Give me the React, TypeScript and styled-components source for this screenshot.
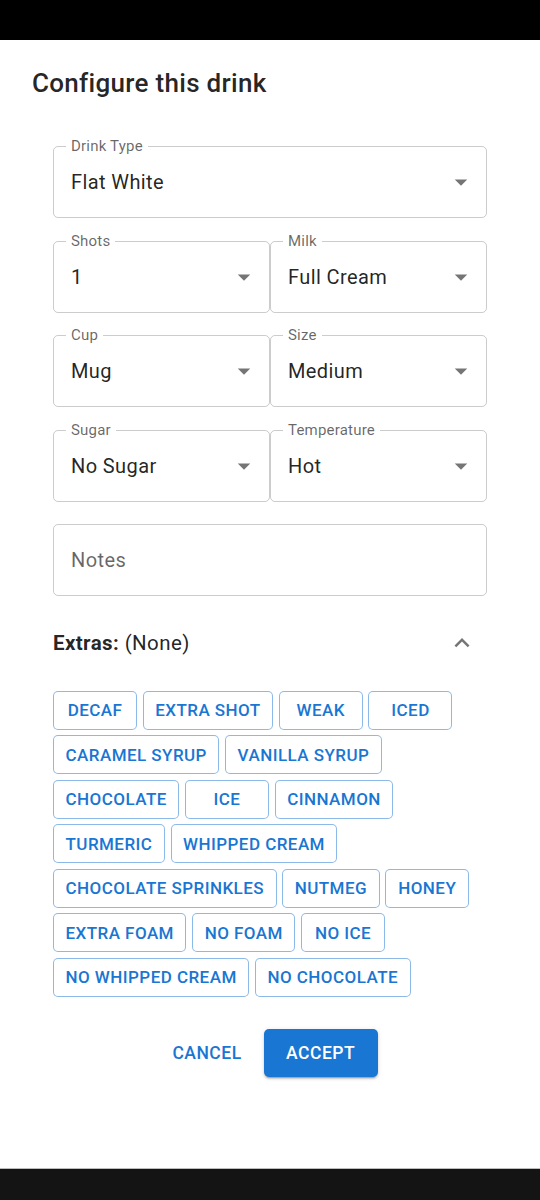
import React from 'react'
import styled, { createGlobalStyle } from 'styled-components'

const GlobalStyle = createGlobalStyle`
  html, body {
    margin: 0;
    padding: 0;
    background: #ffffff;
  }

  body {
    font-family: Roboto, 'Liberation Sans', Arial, sans-serif;
    -webkit-font-smoothing: antialiased;
  }
`

const Primary = '#1976d2'
const TextMain = 'rgba(0, 0, 0, 0.87)'
const TextMuted = 'rgba(0, 0, 0, 0.6)'

const extras = [
  'Decaf',
  'Extra Shot',
  'Weak',
  'Iced',
  'Caramel Syrup',
  'Vanilla Syrup',
  'Chocolate',
  'Ice',
  'Cinnamon',
  'Turmeric',
  'Whipped Cream',
  'Chocolate Sprinkles',
  'Nutmeg',
  'Honey',
  'Extra Foam',
  'No Foam',
  'No Ice',
  'No Whipped Cream',
  'No Chocolate',
]

const selectRows: [string, string][][] = [
  [
    ['Shots', '1'],
    ['Milk', 'Full Cream'],
  ],
  [
    ['Cup', 'Mug'],
    ['Size', 'Medium'],
  ],
  [
    ['Sugar', 'No Sugar'],
    ['Temperature', 'Hot'],
  ],
]

const ArrowDropDown = () => (
  <svg width='30' height='30' viewBox='0 0 24 24' fill='rgba(0,0,0,0.54)'>
    <path d='M7 10l5 5 5-5z' />
  </svg>
)

const ExpandLess = () => (
  <svg width='30' height='30' viewBox='0 0 24 24' fill='rgba(0,0,0,0.54)'>
    <path d='M12 8l-6 6 1.41 1.41L12 10.83l4.59 4.58L18 14z' />
  </svg>
)

const SelectField: React.FunctionComponent<{ label: string; value: string }> = ({ label, value }) => (
  <Field>
    <FieldLabel>{label}</FieldLabel>
    <FieldValue>{value}</FieldValue>
    <ArrowSlot>
      <ArrowDropDown />
    </ArrowSlot>
  </Field>
)

export default function App() {
  return (
    <>
      <GlobalStyle />
      <Screen>
        <StatusBar />
        <Dialog>
          <Title>Configure this drink</Title>
          <Form>
            <SelectField label='Drink Type' value='Flat White' />
            {selectRows.map((row, i) => (
              <Pair key={i}>
                {row.map(([label, value]) => (
                  <SelectField key={label} label={label} value={value} />
                ))}
              </Pair>
            ))}
            <Field>
              <Placeholder>Notes</Placeholder>
            </Field>

            <ExtrasHeader>
              <ExtrasTitle>
                <strong>Extras:</strong> (None)
              </ExtrasTitle>
              <ExpandLess />
            </ExtrasHeader>

            <Chips>
              {extras.map((extra) => (
                <Chip key={extra}>{extra}</Chip>
              ))}
            </Chips>

            <Actions>
              <TextButton>Cancel</TextButton>
              <ContainedButton>Accept</ContainedButton>
            </Actions>
          </Form>
        </Dialog>
        <NavBar />
      </Screen>
    </>
  )
}

const Screen = styled.div`
  display: flex;
  flex-direction: column;
  width: 540px;
  height: 1200px;
  overflow: hidden;
`

const StatusBar = styled.div`
  height: 40px;
  flex-shrink: 0;
  background: #000000;
`

const NavBar = styled.div`
  height: 31px;
  flex-shrink: 0;
  background: #141414;
  border-top: 1px solid #bdbdbd;
`

const Dialog = styled.div`
  flex: 1;
  background: #ffffff;
  padding-top: 27px;
`

const Title = styled.h2`
  margin: 0 0 0 32px;
  font-size: 26px;
  font-weight: 500;
  line-height: 32px;
  letter-spacing: 0.3px;
  color: ${TextMain};
`

const Form = styled.div`
  display: flex;
  flex-direction: column;
  gap: 22.5px;
  padding: 47px 53px 0;
`

const Pair = styled.div`
  display: grid;
  grid-template-columns: 1fr 1fr;
`

const Field = styled.div`
  position: relative;
  display: flex;
  align-items: center;
  height: 72px;
  box-sizing: border-box;
  padding: 0 10px 0 17px;
  border: 1px solid rgba(0, 0, 0, 0.2);
  border-radius: 5px;
`

const FieldLabel = styled.span`
  position: absolute;
  top: -10px;
  left: 12px;
  padding: 0 5px;
  background: #ffffff;
  font-size: 15px;
  line-height: 18px;
  color: ${TextMuted};
  letter-spacing: 0.2px;
`

const FieldValue = styled.span`
  flex: 1;
  font-size: 20px;
  color: ${TextMain};
  letter-spacing: 0.4px;
`

const Placeholder = styled(FieldValue)`
  color: ${TextMuted};
`

const ArrowSlot = styled.span`
  display: flex;
  width: 30px;
  height: 30px;
`

const ExtrasHeader = styled.div`
  display: flex;
  align-items: center;
  justify-content: space-between;
  height: 48px;
  margin-top: 0.5px;
  padding-right: 10px;
`

const ExtrasTitle = styled.div`
  font-size: 20.5px;
  color: ${TextMain};
  letter-spacing: 0.4px;

  strong {
    font-weight: 700;
  }
`

const Chips = styled.div`
  display: flex;
  flex-wrap: wrap;
  gap: 5.5px 5.7px;
  margin-top: 1px;
`

const Chip = styled.button`
  min-width: 84px;
  height: 39px;
  padding: 0 11.5px;
  box-sizing: border-box;
  background: #ffffff;
  border: 1px solid rgba(25, 118, 210, 0.5);
  border-radius: 5px;
  font-family: inherit;
  font-size: 17px;
  font-weight: 500;
  letter-spacing: 0.45px;
  text-transform: uppercase;
  color: ${Primary};
`

const Actions = styled.div`
  display: flex;
  justify-content: center;
  gap: 12px;
  margin-top: 9.5px;
`

const TextButton = styled.button`
  height: 48px;
  padding: 0 10px;
  background: transparent;
  border: none;
  border-radius: 5px;
  font-family: inherit;
  font-size: 17.5px;
  font-weight: 500;
  letter-spacing: 0.5px;
  text-transform: uppercase;
  color: ${Primary};
`

const ContainedButton = styled(TextButton)`
  min-width: 114px;
  padding: 0 20px;
  background: ${Primary};
  color: #ffffff;
  box-shadow: 0 3px 1px -2px rgba(0, 0, 0, 0.2), 0 2px 2px 0 rgba(0, 0, 0, 0.14), 0 1px 5px 0 rgba(0, 0, 0, 0.12);
`
